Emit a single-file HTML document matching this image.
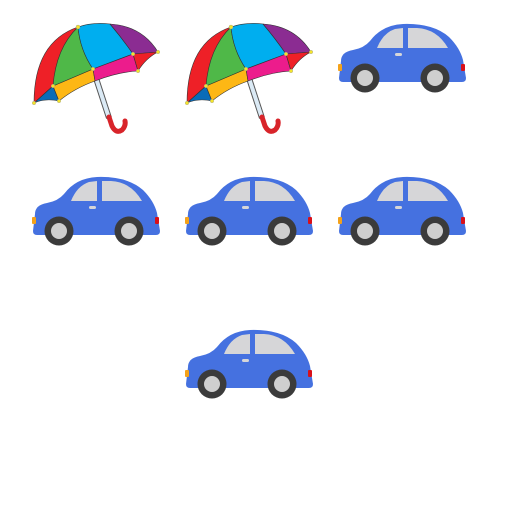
<!DOCTYPE html>
<html><head><style>
html,body{margin:0;padding:0;background:#fff;width:512px;height:512px;overflow:hidden}
svg{display:block}
</style></head><body>
<svg width="512" height="512" viewBox="0 0 512 512" xmlns="http://www.w3.org/2000/svg">
<defs>
<symbol id="car" viewBox="0 0 135 75" width="135" height="75" overflow="visible">
  <path d="M6,41 Q6,32 18,30 Q29,28 35,21 Q47,5 68,4 Q98,3 114,17 Q125,28 128,40 L131,58 Q131,62 127,62 L8,62 Q4,62 4,58 Z" fill="#4571e0"/>
  <path d="M42,28 Q48,13 60,9 L68,8 L68,28 Z" fill="#d6d6d8"/>
  <path d="M73,8 L82,8 Q102,9 113,28 L73,28 Z" fill="#d6d6d8"/>
  <rect x="60" y="33" width="7" height="3" rx="1.5" fill="#d6d6d8"/>
  <rect x="3" y="44" width="4" height="7" rx="1" fill="#f4a21a"/>
  <rect x="126" y="44" width="4" height="7" rx="1" fill="#d8101a"/>
  <circle cx="30" cy="58" r="14.5" fill="#3b3b3b"/>
  <circle cx="30" cy="58" r="8" fill="#cfcfcf"/>
  <circle cx="100" cy="58" r="14.5" fill="#3b3b3b"/>
  <circle cx="100" cy="58" r="8" fill="#cfcfcf"/>
</symbol>
<symbol id="umb" viewBox="0 0 135 120" width="135" height="120" overflow="visible">
  <path d="M63,49 L79,98" stroke="#555" stroke-width="6"/>
  <path d="M63,49 L79,98" stroke="#dbeaf5" stroke-width="4"/>
  <path d="M79,97 L82,106 Q86,114 92,110 Q96,106 95,101" fill="none" stroke="#d8242a" stroke-width="5" stroke-linecap="round"/>
  <g stroke="#333" stroke-width="0.6" stroke-linejoin="round">
  <path d="M48,7 Q4,22 4,83 L23,66 Z" fill="#ee2027"/>
  <path d="M4,83 L23,66 L29,81 Q15,78 4,83 Z" fill="#0a6cb8"/>
  <path d="M23,66 L63,49 L65,61 Q45,68 29,81 Z" fill="#fdb715"/>
  <path d="M48,7 Q26,28 23,66 L63,49 Q50,30 48,7 Z" fill="#4fb848"/>
  <path d="M48,7 Q62,2 80,4 Q92,18 103,34 L63,49 Q50,30 48,7 Z" fill="#00aeef"/>
  <path d="M80,4 Q112,6 128,32 L103,34 Q92,18 80,4 Z" fill="#8b2c92"/>
  <path d="M63,49 L103,34 L108,51 Q88,52 65,61 Z" fill="#ec1c8c"/>
  <path d="M103,34 L128,32 Q116,38 108,51 Z" fill="#ee2027"/>
  </g>
  <g fill="#f5e52a" stroke="#999" stroke-width="0.4">
    <circle cx="48" cy="7" r="2"/><circle cx="4" cy="83" r="1.8"/><circle cx="23" cy="66" r="1.8"/>
    <circle cx="29" cy="81" r="1.8"/><circle cx="63" cy="49" r="1.8"/><circle cx="103" cy="34" r="1.8"/>
    <circle cx="108" cy="51" r="1.8"/><circle cx="128" cy="32" r="1.8"/>
  </g>
</symbol>
</defs>
<use href="#umb" x="30" y="20"/>
<use href="#umb" x="183" y="20"/>
<use href="#car" x="335" y="20"/>
<use href="#car" x="29" y="173"/>
<use href="#car" x="182" y="173"/>
<use href="#car" x="335" y="173"/>
<use href="#car" x="182" y="326"/>
</svg>
</body></html>
